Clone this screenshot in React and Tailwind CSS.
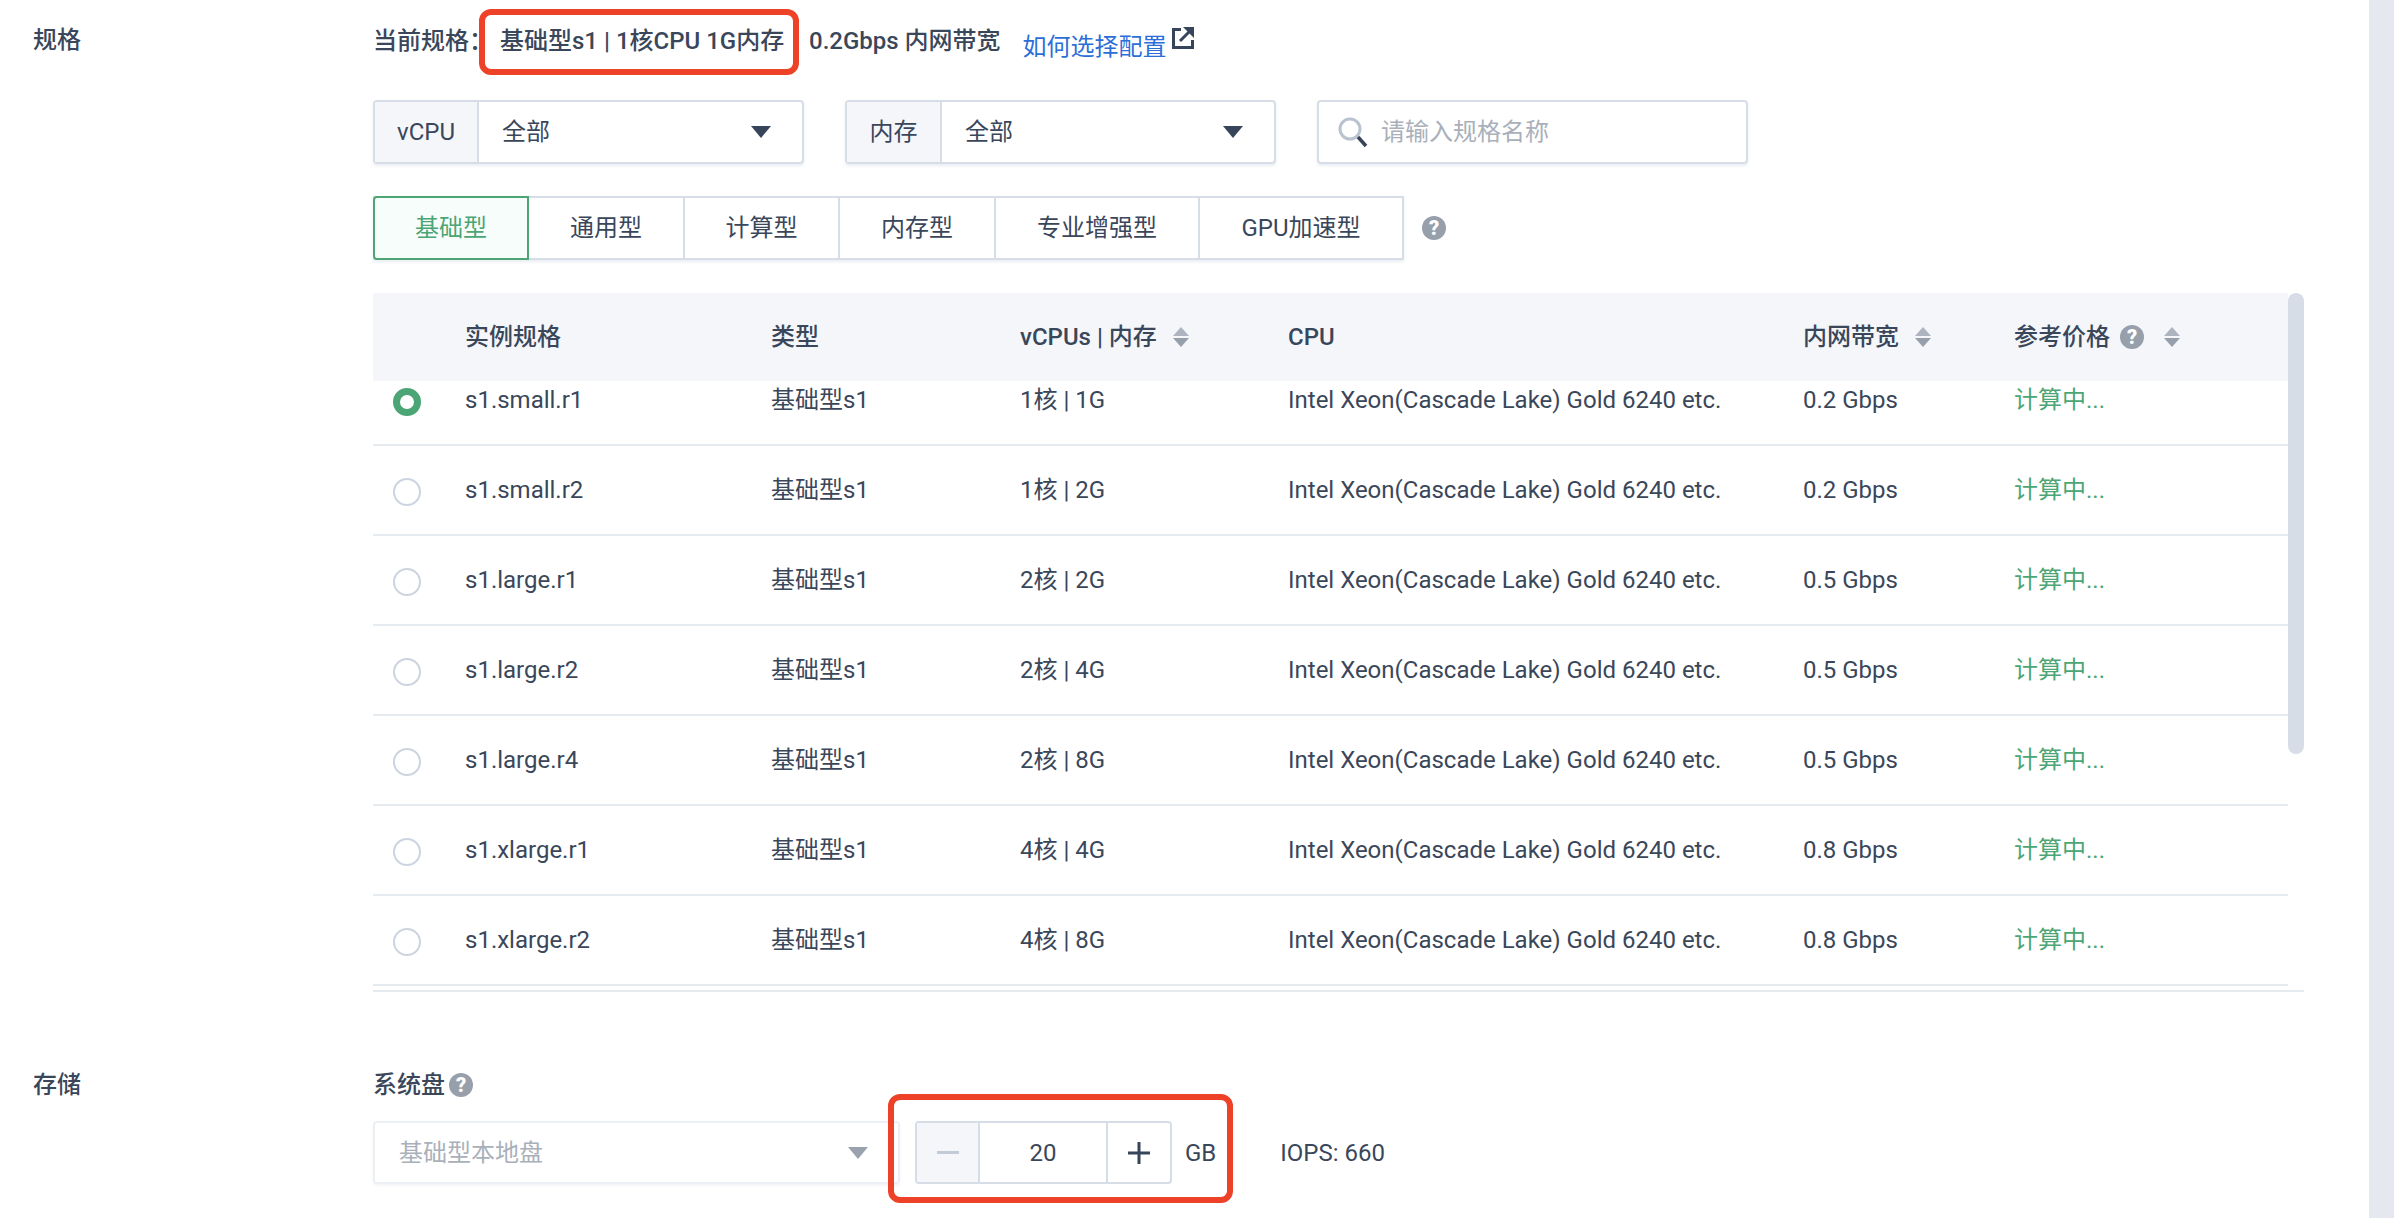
const rows = [
  ["s1.small.r1", "1核 | 1G", "0.2 Gbps"],
  ["s1.small.r2", "1核 | 2G", "0.2 Gbps"],
  ["s1.large.r1", "2核 | 2G", "0.5 Gbps"],
  ["s1.large.r2", "2核 | 4G", "0.5 Gbps"],
  ["s1.large.r4", "2核 | 8G", "0.5 Gbps"],
  ["s1.xlarge.r1", "4核 | 4G", "0.8 Gbps"],
  ["s1.xlarge.r2", "4核 | 8G", "0.8 Gbps"],
];

const tabs = [
  ["基础型", "w-[156px]"],
  ["通用型", "w-[156px]"],
  ["计算型", "w-[155px]"],
  ["内存型", "w-[156px]"],
  ["专业增强型", "w-[204px]"],
  ["GPU加速型", "w-[202px]"],
];

const gridCols = "grid grid-cols-[92px_306px_249px_268px_515px_211px_1fr] items-center";

function Help({ className = "" }) {
  return (
    <span className={`inline-flex w-6 h-6 shrink-0 rounded-full bg-[#979fab] text-white text-[20px] font-black items-center justify-center leading-none ${className}`}>?</span>
  );
}

function Sort({ className = "" }) {
  return (
    <svg width="16" height="20" viewBox="0 0 16 20" className={`shrink-0 ${className}`}>
      <path d="M8 0 L16 9 L0 9 Z" fill="#adb4c0" />
      <path d="M0 11 L16 11 L8 20 Z" fill="#979fab" />
    </svg>
  );
}

function Caret({ color = "#36455a" }) {
  return (
    <svg width="20" height="12" viewBox="0 0 20 12" className="shrink-0">
      <path d="M0 0 H20 L10 12 Z" fill={color} />
    </svg>
  );
}

function FilterSelect({ label, addonWidth }) {
  return (
    <div className="flex w-[431px] h-16 border-2 border-[#d6dde7] rounded shadow-[0_2px_3px_rgba(214,221,231,0.5)]">
      <div className={`${addonWidth} flex items-center justify-center bg-[#f4f6fa] border-r-2 border-[#d6dde7]`}>{label}</div>
      <div className="flex-1 flex items-center justify-between pl-[23px] pr-[31px]">
        <span>全部</span>
        <Caret />
      </div>
    </div>
  );
}

export default function App() {
  return (
    <div className="flex h-[1218px] w-full overflow-hidden bg-white text-[24px] text-[#3a475a] font-[Roboto,'Noto_Sans_CJK_SC',sans-serif]">
      <main className="flex-1 flex flex-col min-w-0">
        {/* 规格 */}
        <section className="flex">
          <div className="w-[373px] shrink-0 pl-[33px] pt-[22px] font-medium leading-9">规格</div>
          <div className="w-[1931px] pt-[9px]">
            <div className="flex items-center h-[66px] font-medium">
              <span className="-mt-[2px]">当前规格：</span>
              <span className="-ml-[14px] flex items-center h-[66px] w-[320px] pl-[15px] pb-[2px] border-[6px] border-[#ee4228] rounded-xl whitespace-nowrap">
                基础型s1 | 1核CPU 1G内存
              </span>
              <span className="ml-[10px] -mt-[2px] whitespace-nowrap">0.2Gbps 内网带宽</span>
              <a className="ml-[22px] mt-[10px] font-normal text-[#2c6ed8] whitespace-nowrap">如何选择配置</a>
              <svg width="22" height="22" viewBox="0 0 22 22" className="ml-[5px] -mt-[9px] shrink-0" fill="none" stroke="#36455a" strokeWidth="3">
                <path d="M9 2.5 H1.5 V20.5 H20.5 V13" />
                <path d="M8 14 L19 3" />
                <path d="M11 0 H22 V11 Z" fill="#36455a" stroke="none" />
              </svg>
            </div>

            <div className="flex mt-[25px] gap-[41px]">
              <FilterSelect label="vCPU" addonWidth="w-[104px]" />
              <FilterSelect label="内存" addonWidth="w-[95px]" />
              <div className="flex items-center w-[431px] h-16 border-2 border-[#d6dde7] rounded pl-[18px] shadow-[0_2px_3px_rgba(214,221,231,0.5)]">
                <svg width="32" height="32" viewBox="0 0 32 32" className="shrink-0">
                  <circle cx="13" cy="13" r="10" fill="none" stroke="#b9c3d0" strokeWidth="3" />
                  <path d="M21 21 L29 30" stroke="#36455a" strokeWidth="3.5" />
                </svg>
                <span className="ml-3 text-[#a9b0ba]">请输入规格名称</span>
              </div>
            </div>

            <div className="flex items-center mt-8">
              <div className="flex h-16 border-y-2 border-r-2 border-[#d6dde7] shadow-[0_2px_3px_rgba(214,221,231,0.5)]">
                {tabs.map(([name, w], i) => (
                  <div
                    key={name}
                    className={
                      i === 0
                        ? `${w} flex items-center justify-center -my-[2px] border-2 border-[#4ba574] rounded-l bg-[#f7fdfa] text-[#4ba574]`
                        : `${w} flex items-center justify-center border-r-2 last:border-r-0 border-[#d6dde7]`
                    }
                  >
                    {name}
                  </div>
                ))}
              </div>
              <Help className="ml-[18px]" />
            </div>

            {/* 表格 */}
            <div className="relative mt-[33px] w-[1931px]">
              <div className="w-[1915px]">
                <div className={`${gridCols} h-[88px] bg-[#f4f6fa] font-medium`}>
                  <div />
                  <div>实例规格</div>
                  <div>类型</div>
                  <div className="flex items-center gap-[16px]">vCPUs | 内存 <Sort /></div>
                  <div>CPU</div>
                  <div className="flex items-center gap-[16px]">内网带宽 <Sort /></div>
                  <div className="flex items-center">参考价格 <Help className="ml-[10px]" /><Sort className="ml-[20px]" /></div>
                </div>
                <div className="h-[609px] overflow-hidden">
                  <div className="-mt-[25px]">
                    {rows.map(([name, spec, band], i) => (
                      <div key={name} className={`${gridCols} h-[90px] border-b-2 border-[#e6ebf2]`}>
                        <div className="pl-5 pt-1">
                          {i === 0 ? (
                            <div className="w-7 h-7 rounded-full border-[7px] border-[#4ba574] bg-white" />
                          ) : (
                            <div className="w-7 h-7 rounded-full border-2 border-[#ccd4e0] bg-white" />
                          )}
                        </div>
                        <div>{name}</div>
                        <div>基础型s1</div>
                        <div>{spec}</div>
                        <div>Intel Xeon(Cascade Lake) Gold 6240 etc.</div>
                        <div>{band}</div>
                        <div className="text-[#4ba574]">计算中...</div>
                      </div>
                    ))}
                  </div>
                </div>
              </div>
              <div className="border-t-2 border-[#e6ebf2]" />
              {/* 滚动条 */}
              <div className="absolute top-0 right-0 w-4 h-[461px] rounded-lg bg-[#d6dde7]" />
            </div>
          </div>
        </section>

        {/* 存储 */}
        <section className="flex mt-[75px]">
          <div className="w-[373px] shrink-0 pl-[33px] font-medium leading-9">存储</div>
          <div>
            <div className="flex items-center h-9 font-medium">
              系统盘 <Help className="ml-1" />
            </div>
            <div className="flex items-center mt-[18px] h-[63px]">
              <div className="flex items-center justify-between w-[527px] h-[63px] pl-6 pr-[30px] border-2 border-[#eceff4] rounded text-[#a9b0ba] shadow-[0_2px_3px_rgba(214,221,231,0.3)]">
                <span>基础型本地盘</span>
                <Caret color="#9aa2ae" />
              </div>
              <div className="relative ml-[15px] flex h-[63px] w-[257px] border-2 border-[#d6dde7] rounded">
                <div className="w-[63px] flex items-center justify-center bg-[#f4f6fa] border-r-2 border-[#d6dde7]">
                  <div className="w-[22px] h-[3px] bg-[#c3cbd6]" />
                </div>
                <div className="flex-1 flex items-center justify-center">20</div>
                <div className="w-[64px] flex items-center justify-center border-l-2 border-[#d6dde7]">
                  <svg width="24" height="24" viewBox="0 0 24 24"><path d="M12 1 V23 M1 12 H23" stroke="#36455a" strokeWidth="3" /></svg>
                </div>
                {/* 红框标注 */}
                <div className="absolute -left-[29px] -top-[29px] w-[345px] h-[109px] border-[6px] border-[#ee4228] rounded-xl pointer-events-none" />
              </div>
              <span className="ml-[13px]">GB</span>
              <span className="ml-[64px]">IOPS: 660</span>
            </div>
          </div>
        </section>
      </main>
      <div className="w-[25px] shrink-0 bg-[#e5e9ef]" />
    </div>
  );
}
